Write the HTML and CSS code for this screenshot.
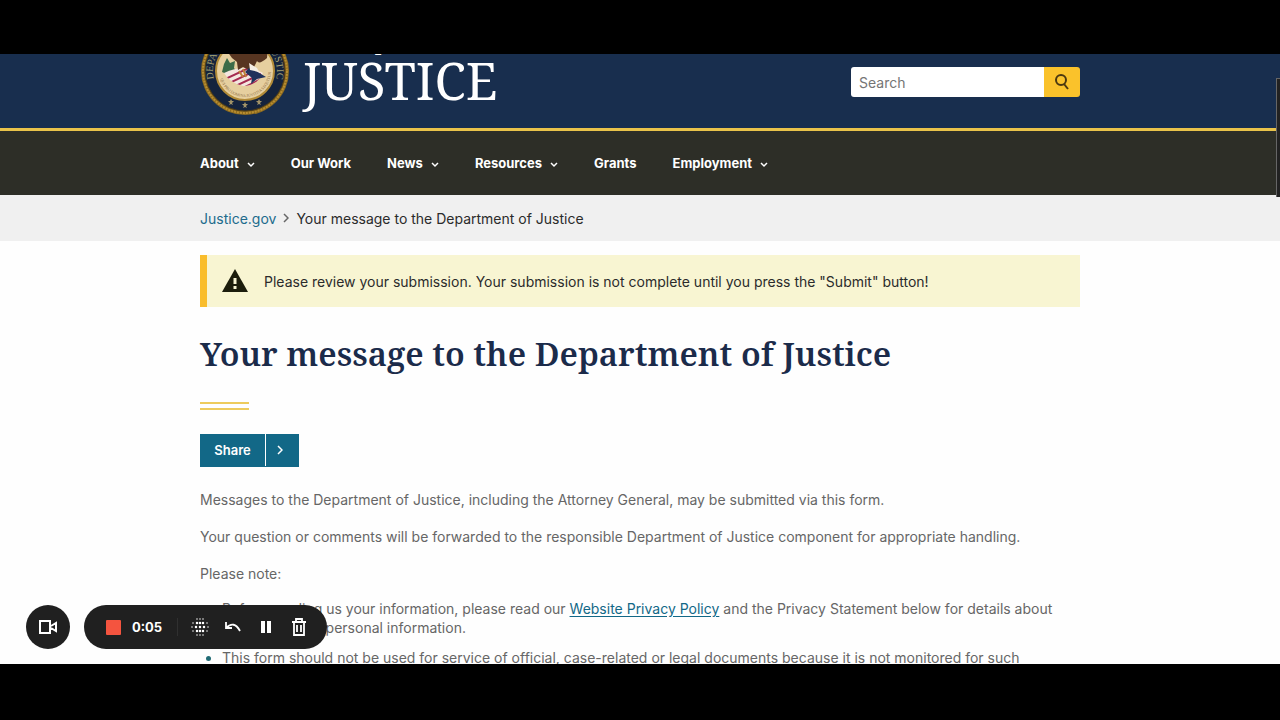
FILE: index.html
```html
<!DOCTYPE html>
<html lang="en">
<head>
  <meta charset="UTF-8" />
  <meta name="viewport" content="width=device-width, initial-scale=1.0" />
  <title>Your message to the Department of Justice</title>
  <link rel="stylesheet" href="styles.css">
</head>
<body>
<div class="screen">
  <header class="header">
    <div class="container header-row">
      <a class="brand" href="#" aria-label="Department of Justice home">
        <svg class="seal" viewBox="0 0 88 88" aria-hidden="true">
          <defs>
            <path id="ring" d="M13 52 A32 32 0 1 1 75 52" />
            <path id="motto" d="M18 44 A26 26 0 0 0 70 44" />
            <clipPath id="shield"><path d="M23 46 Q44 36 62 46 Q56 59 42 59 Q29 56 23 46Z" /></clipPath>
          </defs>
          <circle cx="44" cy="44" r="44" fill="#8b6a20" />
          <circle cx="44" cy="44" r="42" fill="none" stroke="#b88d30" stroke-width="2" stroke-dasharray="2 1" />
          <circle cx="44" cy="44" r="40" fill="#14233d" stroke="#4c3b16" />
          <circle cx="44" cy="44" r="29" fill="#e6cf9f" stroke="#b28b38" stroke-width="2" />
          <text class="seal-name"><textPath href="#ring">DEPARTMENT OF JUSTICE</textPath></text>
          <text class="seal-motto"><textPath href="#motto" startOffset="8">QUI PRO DOMINA JUSTITIA SEQUITUR</textPath></text>
          <path d="M21 45l2-8 3-6 3 5 5-2-1 7 3 4-8 3z" fill="#3c6b48" />
          <g clip-path="url(#shield)">
            <path d="M20 34h44v30H20z" fill="#f3e6df" />
            <path d="M20 54l30-14M22 59l34-16M26 63l34-16M34 65l28-14" stroke="#a52a50" stroke-width="2" />
          </g>
          <path d="M28 18Q44 12 67 20L66 31Q58 38 56 34L53 40 48 43 42 40 37 43 36 35 31 31 26 24Z" fill="#573521" />
          <path d="M48 41l7 3 10 6-9 2-6 5 1-6-7-6z" fill="#20325c" />
          <path d="M48 36l8 5 2 4-9-2z" fill="#f5efe4" />
          <path d="M38 44l4 6M42 42l3 8" stroke="#bd8137" stroke-width="2" />
          <g fill="#a39468">
            <path id="star" d="M44 75l1 2h2l-2 2 1 2-2-1-2 1 1-2-2-2h2z" />
            <use href="#star" x="-14" y="-3" />
            <use href="#star" x="14" y="-3" />
          </g>
        </svg>
        <span class="brand-text">
          <span class="brand-small">U.S. Department of</span>
          <span class="brand-large">JUSTICE</span>
        </span>
      </a>
      <form class="search">
        <input type="search" placeholder="Search" aria-label="Search" />
        <button type="submit" aria-label="Submit search">
          <svg width="16" height="18" viewBox="0 0 16 18"><circle cx="7" cy="7" r="5" /><path d="M10 11l4 5" /></svg>
        </button>
      </form>
    </div>
  </header>

  <nav class="nav">
    <div class="container nav-row">
      <a href="#">About <svg viewBox="0 0 8 6"><path d="M1 1l3 3 3-3" /></svg></a>
      <a href="#">Our Work</a>
      <a href="#">News <svg viewBox="0 0 8 6"><path d="M1 1l3 3 3-3" /></svg></a>
      <a href="#">Resources <svg viewBox="0 0 8 6"><path d="M1 1l3 3 3-3" /></svg></a>
      <a href="#">Grants</a>
      <a href="#">Employment <svg viewBox="0 0 8 6"><path d="M1 1l3 3 3-3" /></svg></a>
    </div>
  </nav>

  <div class="breadcrumb">
    <div class="container breadcrumb-row">
      <a href="#">Justice.gov</a>
      <svg viewBox="0 0 6 10"><path d="M1 1l4 4-4 4" /></svg>
      <span>Your message to the Department of Justice</span>
    </div>
  </div>

  <main class="container">
    <div class="alert">
      <svg viewBox="0 0 26 24"><path d="M13 0L26 23H0z" fill="#1c1d0c" /><path d="M13 9v6M13 17v3" stroke="#f7f4d3" stroke-width="3" /></svg>
      <p>Please review your submission. Your submission is not complete until you press the "Submit" button!</p>
    </div>
    <h1>Your message to the Department of Justice</h1>
    <div class="rule"></div>
    <button class="share" type="button">
      <span class="share-label">Share</span>
      <span class="share-arrow"><svg viewBox="0 0 6 10"><path d="M1 1l4 4-4 4" /></svg></span>
    </button>
    <div class="copy">
      <p>Messages to the Department of Justice, including the Attorney General, may be submitted via this form.</p>
      <p>Your question or comments will be forwarded to the responsible Department of Justice component for appropriate handling.</p>
      <p>Please note:</p>
      <ul>
        <li>Before sending us your information, please read our <a href="#">Website Privacy Policy</a> and the Privacy Statement below for details about how we handle personal information.</li>
        <li>This form should not be used for service of official, case-related or legal documents because it is not monitored for such</li>
      </ul>
    </div>
  </main>

  <div class="scrollbar"></div>

  <!-- Recorder controls -->
  <div class="recorder">
    <button class="camera" type="button" aria-label="Camera">
      <svg width="20" height="14" viewBox="0 0 20 14"><path d="M2 1h10v12H2zM13 6l5-3v8l-5-3" /></svg>
    </button>
    <div class="controls">
      <button class="stop" type="button" aria-label="Stop recording"><span class="stop-icon"></span>0:05</button>
      <span class="divider"></span>
      <button class="tool" type="button" aria-label="Effects">
        <svg width="18" height="18" viewBox="0 0 18 18" class="dots">
          <path d="M6 1h0M12 1h0M2 5h0M16 5h0M1 9h0M17 9h0M2 13h0M16 13h0M6 17h0M12 17h0M9 1h0M9 17h0" stroke-width="1.5" />
          <path d="M6 5h0M9 5h0M12 5h0M5 9h0M9 9h0M13 9h0M6 13h0M9 13h0M12 13h0" stroke-width="2.5" />
        </svg>
      </button>
      <button class="tool" type="button" aria-label="Undo">
        <svg width="18" height="14" viewBox="0 0 18 14"><path d="M2 2v6h6M2 8Q10 0 16 11" /></svg>
      </button>
      <button class="tool" type="button" aria-label="Pause">
        <svg width="12" height="14" viewBox="0 0 12 14"><path d="M3 1v12M9 1v12" stroke-width="4" /></svg>
      </button>
      <button class="tool" type="button" aria-label="Delete">
        <svg width="16" height="18" viewBox="0 0 16 18"><path d="M1 4h14M5 4V1h6v3M3 4v13h10V4M6 7v7M10 7v7" /></svg>
      </button>
    </div>
  </div>
</div>
</body>
</html>
```
FILE: styles.css
```css
* { box-sizing: border-box; margin: 0; padding: 0; }
body {
  height: 100vh;
  padding: 54px 0 56px;
  background: #000;
  color: #2b2b2b;
  font-family: Inter, "Liberation Sans", sans-serif;
  font-size: 14px;
  line-height: 19px;
}
button, input { font: inherit; border: 0; }
button { cursor: pointer; }
svg { fill: none; flex-shrink: 0; }

/* Visible part of the page */
.screen { position: relative; height: 100%; overflow: hidden; background: #fefefe; }
.container { max-width: 880px; margin: 0 auto; }

/* Header */
.header { height: 77px; background: #182e4e; border-bottom: 3px solid #e9c34a; }
.header-row { height: 74px; display: flex; justify-content: space-between; align-items: flex-end; }
.brand { display: flex; align-items: flex-end; gap: 13px; margin-bottom: 13px; color: #fff; text-decoration: none; }
.seal { width: 90px; height: 88px; }
.seal-name { font: 10px "Liberation Serif", serif; fill: #a5a171; }
.seal-motto { font: 4px "Liberation Serif", serif; fill: #8a6a40; }
.brand-text { display: flex; flex-direction: column; padding-bottom: 8px; font-family: "Noto Serif", "Liberation Serif", serif; }
.brand-small { font-size: 22px; line-height: 24px; }
.brand-large { font-size: 51px; line-height: 54px; }
.search { display: flex; width: 229px; height: 30px; margin-bottom: 31px; border-radius: 3px; overflow: hidden; }
.search input { flex: 1; min-width: 0; padding: 0 8px; background: #fff; }
.search input::placeholder { color: #757575; }
.search button { width: 36px; background: #fac22b; display: flex; align-items: center; justify-content: center; }
.search svg { stroke: #4b3810; stroke-width: 2; }

/* Navigation */
.nav { background: #2d2e27; }
.nav-row { display: flex; align-items: center; gap: 36px; height: 64px; }
.nav a { display: flex; align-items: center; gap: 8px; color: #fff; font-size: 13px; font-weight: 700; text-decoration: none; }
.nav svg { width: 8px; height: 6px; margin-top: 3px; stroke: #fff; stroke-width: 1.5; }

/* Breadcrumb */
.breadcrumb { background: #f0f0f0; }
.breadcrumb-row { display: flex; align-items: center; gap: 7px; height: 46px; }
.breadcrumb a { color: #216b8c; text-decoration: none; }
.breadcrumb svg { width: 6px; height: 10px; stroke: #666; stroke-width: 1.5; }

/* Main content */
.alert {
  display: flex; align-items: center; gap: 16px;
  height: 52px; margin-top: 14px; padding-left: 15px;
  background: #f8f5d2; border-left: 7px solid #f9bd2c;
}
.alert svg { width: 26px; height: 24px; }
h1 { margin-top: 24px; color: #1b2b4a; font: 600 33px/46px "Noto Serif", "Liberation Serif", serif; }
.rule { width: 49px; height: 8px; margin: 25px 0 24px; border: solid #edcb5c; border-width: 2px 0; }
.share { display: flex; height: 33px; background: #126887; color: #fff; font-size: 13px; font-weight: 600; }
.share-label, .share-arrow { display: flex; align-items: center; height: 32px; }
.share-label { width: 66px; justify-content: center; border-right: 1px solid #fff; }
.share-arrow { width: 33px; padding-left: 11px; }
.share svg { width: 6px; height: 10px; stroke: #fff; stroke-width: 1.5; }
.copy { margin-top: 23px; color: #666; }
.copy p { margin-bottom: 18px; }
.copy p:last-of-type { margin-bottom: 16px; }
.copy ul { padding-left: 22px; }
.copy li { margin-bottom: 11px; }
.copy li::marker { color: #216b75; }
.copy a { color: #126887; text-underline-offset: 2px; }

.scrollbar { position: absolute; top: 24px; right: 0; width: 4px; height: 119px; background: #222; border-left: 1px solid #666; border-top: 1px solid #666; }

/* Recorder overlay */
.recorder { position: absolute; left: 26px; bottom: 15px; display: flex; gap: 14px; }
.recorder svg { stroke: #fff; stroke-width: 2; }
.recorder button { display: flex; align-items: center; background: none; color: #fff; }
.recorder .camera { width: 44px; height: 44px; justify-content: center; border-radius: 50%; background: #202020; }
.controls { display: flex; align-items: center; width: 243px; height: 44px; padding-left: 22px; border-radius: 22px; background: #202020; }
.recorder .stop { gap: 11px; font-size: 13px; font-weight: 700; }
.recorder .tool { width: 33px; justify-content: center; }
.recorder .tool svg { stroke-width: 1.8; }
.stop-icon { width: 15px; height: 15px; border-radius: 1px; background: #f4543f; }
.divider { width: 1px; height: 18px; margin: 0 5px 0 15px; background: #303030; }
.dots { stroke-linecap: round; }
```
